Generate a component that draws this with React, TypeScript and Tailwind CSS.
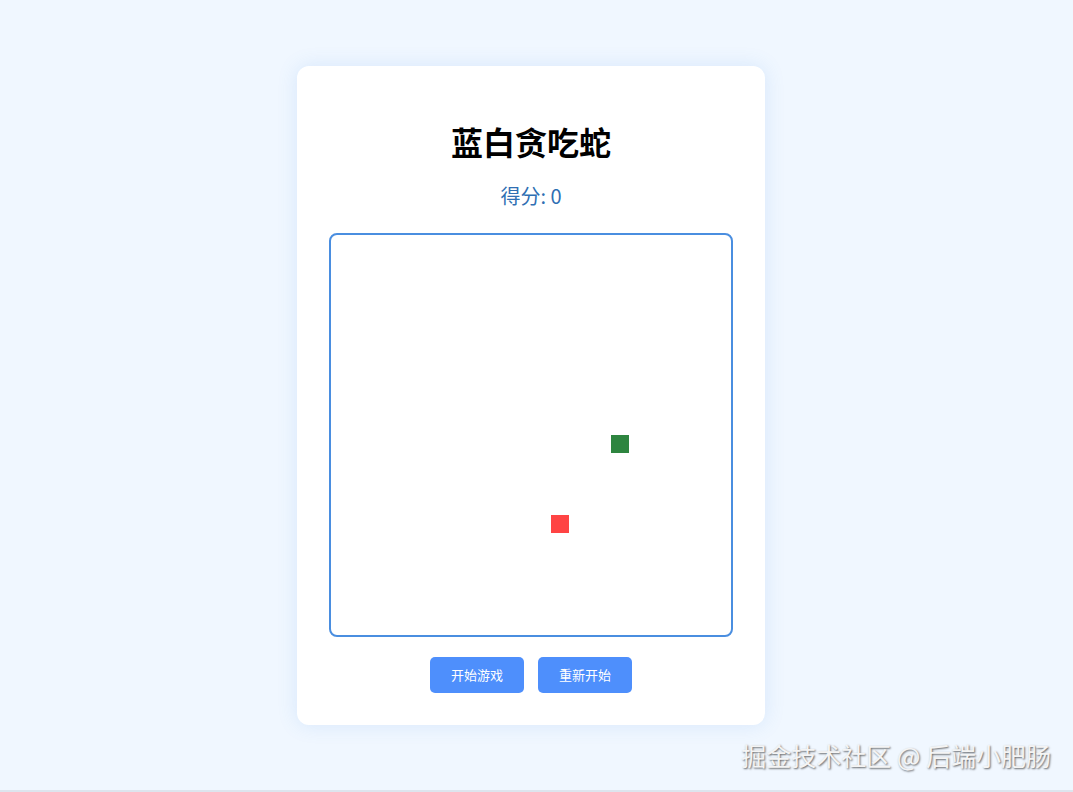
import React from "react";

const font = '"Noto Sans CJK SC", "Noto Sans", sans-serif';

export default function App() {
  const cells = [
    { x: 280, y: 200, color: "#2e8540" },
    { x: 220, y: 280, color: "#ff4444" },
  ];
  return (
    <div
      className="relative w-[1073px] h-[792px] overflow-hidden bg-[#f0f7ff] flex flex-col"
      style={{ fontFamily: font }}
    >
      <div className="flex-1">
        <div className="ml-[297px] mt-[66px] w-[468px] rounded-[12px] bg-white px-8 pt-8 pb-8 shadow-[0_0_20px_rgba(74,144,226,0.15)] flex flex-col items-center">
          <h1 className="mt-[27px] text-[32px] leading-[32px] font-bold text-black">蓝白贪吃蛇</h1>
          <div className="mt-[29px] text-[20px] leading-[20px] text-[#2f6fb3]">得分: 0</div>
          <div className="mt-[27px] relative w-[404px] h-[404px] rounded-[8px] border-2 border-[#4a8ee0] bg-white">
            {cells.map((c, i) => (
              <div
                key={i}
                className="absolute w-[18px] h-[18px]"
                style={{ left: c.x, top: c.y, backgroundColor: c.color }}
              />
            ))}
          </div>
          <div className="mt-[20px] flex gap-[14px]">
            <button className="w-[94px] h-[36px] rounded-[5px] bg-[#4e8ffc] text-white text-[13px] leading-[16px]">
              开始游戏
            </button>
            <button className="w-[94px] h-[36px] rounded-[5px] bg-[#4e8ffc] text-white text-[13px] leading-[16px]">
              重新开始
            </button>
          </div>
        </div>
      </div>
      <div className="h-[2px] bg-[#dde5ee]" />
      <div
        className="absolute right-[22px] top-[740px] text-[25px] leading-[30px] text-[#f4f4f4] [text-shadow:1px_1px_2px_rgba(0,0,0,0.6)]"
      >
        掘金技术社区 @ 后端小肥肠
      </div>
    </div>
  );
}
